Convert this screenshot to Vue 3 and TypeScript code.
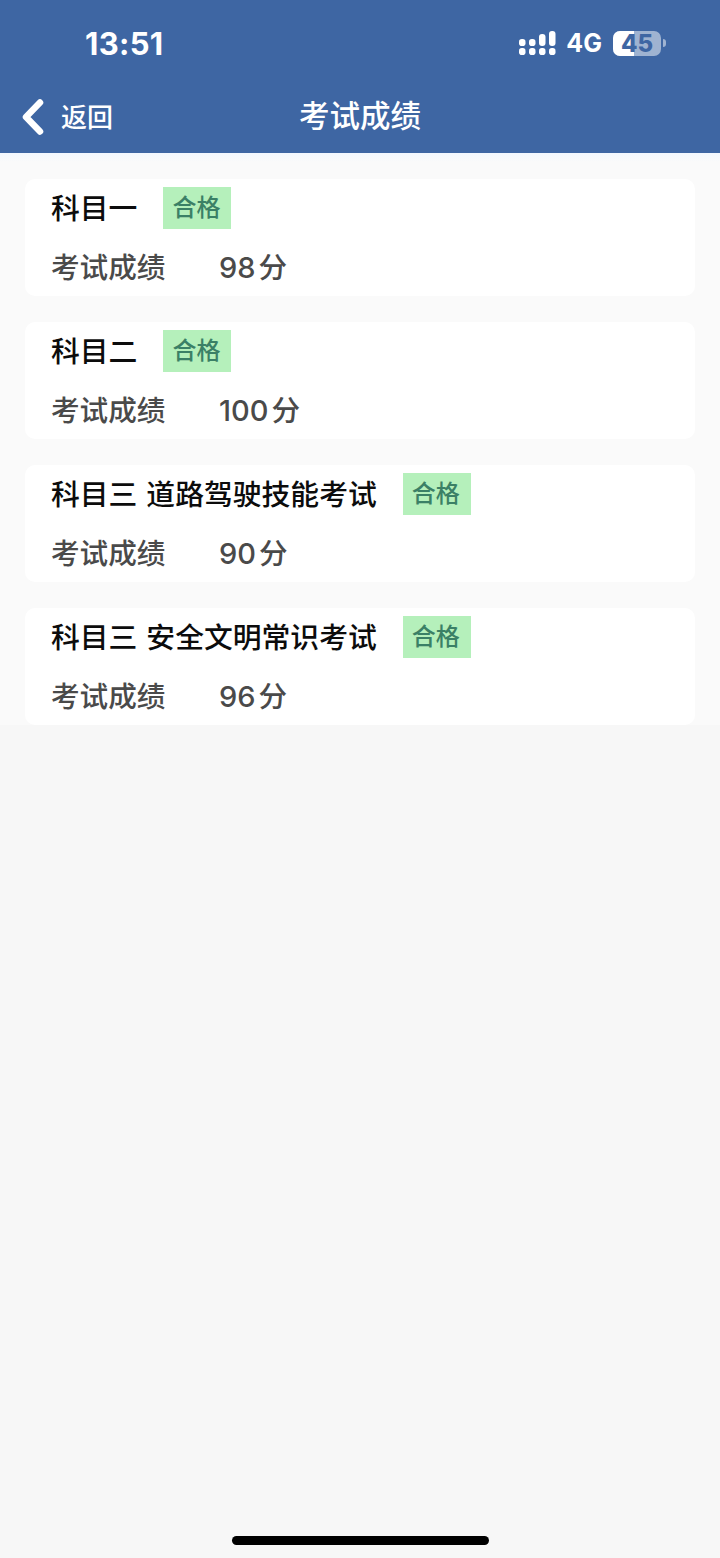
<script setup lang="ts">
interface ExamResult {
  id: number
  name: string
  score: number
}

const results: ExamResult[] = [
  { id: 1, name: '科目一', score: 98 },
  { id: 2, name: '科目二', score: 100 },
  { id: 3, name: '科目三 道路驾驶技能考试', score: 90 },
  { id: 4, name: '科目三 安全文明常识考试', score: 96 },
]
</script>

<template>
  <div class="page">
    <header class="header">
      <div class="status-bar">
        <span class="time">13:51</span>
        <div class="status-right">
          <svg class="signal" viewBox="0 0 37 24" width="37" height="24" fill="#fff">
            <rect x="0" y="8" width="6.5" height="7" rx="2.8" />
            <rect x="0" y="17" width="6.5" height="7" rx="2.8" />
            <rect x="10" y="8" width="6.5" height="7" rx="2.8" />
            <rect x="10" y="17" width="6.5" height="7" rx="2.8" />
            <rect x="20" y="3" width="6.5" height="12" rx="3" />
            <rect x="20" y="17" width="6.5" height="7" rx="2.8" />
            <rect x="30" y="0" width="6.5" height="15" rx="3" />
            <rect x="30" y="17" width="6.5" height="7" rx="2.8" />
          </svg>
          <span class="network">4G</span>
          <div class="battery">
            <div class="battery-body">
              <div class="battery-level" />
              <span class="battery-text">45</span>
            </div>
            <div class="battery-cap" />
          </div>
        </div>
      </div>
      <div class="nav-bar">
        <div class="nav-back">
          <svg viewBox="0 0 24 36" width="24" height="36" fill="none" stroke="#fff" stroke-width="6.5" stroke-linecap="round" stroke-linejoin="round">
            <path d="M19 3.5 5 18l14 14.5" />
          </svg>
          <span class="back-label">返回</span>
        </div>
        <h1 class="nav-title">考试成绩</h1>
      </div>
    </header>

    <main class="list">
      <section v-for="item in results" :key="item.id" class="card">
        <div class="card-title">
          <span class="subject">{{ item.name }}</span>
          <span class="tag">合格</span>
        </div>
        <div class="card-score">
          <span class="score-label">考试成绩</span>
          <span class="score-value"><span class="num">{{ item.score }}</span>分</span>
        </div>
      </section>
    </main>

    <div class="home-indicator" />
  </div>
</template>

<style>
html,
body {
  margin: 0;
  background: #f7f7f7;
}
</style>

<style scoped>
.page {
  position: relative;
  width: 720px;
  height: 1558px;
  overflow: hidden;
  background: #f7f7f7;
  font-family: "Noto Sans CJK SC", "Liberation Sans", sans-serif;
}

.header {
  height: 153px;
  background: #3e66a3;
  color: #fff;
}

.status-bar {
  height: 80px;
  padding: 6px 54px 0 85px;
  display: flex;
  align-items: center;
  justify-content: space-between;
  box-sizing: border-box;
}

.time {
  font-family: Inter, "Liberation Sans", sans-serif;
  font-size: 31px;
  font-weight: 700;
  letter-spacing: 0.3px;
}

.status-right {
  display: flex;
  align-items: center;
}

.signal {
  margin-right: 10px;
}

.network {
  font-family: Inter, "Liberation Sans", sans-serif;
  font-size: 25px;
  font-weight: 700;
  margin-right: 11px;
}

.battery {
  display: flex;
  align-items: center;
}

.battery-body {
  position: relative;
  width: 48px;
  height: 25px;
  border-radius: 7px;
  background: rgba(255, 255, 255, 0.5);
}

.battery-level {
  width: 21px;
  height: 100%;
  border-radius: 7px 0 0 7px;
  background: #fff;
}

.battery-text {
  position: absolute;
  inset: 0;
  text-align: center;
  font-family: Inter, "Liberation Sans", sans-serif;
  font-size: 24px;
  font-weight: 800;
  line-height: 25px;
  color: #3e66a3;
}

.battery-cap {
  width: 3px;
  height: 8px;
  margin-left: 2px;
  border-radius: 0 3px 3px 0;
  background: rgba(255, 255, 255, 0.5);
}

.nav-bar {
  position: relative;
  height: 73px;
  display: flex;
  align-items: center;
  justify-content: center;
}

.nav-back {
  position: absolute;
  left: 21px;
  top: 18px;
  display: flex;
  align-items: center;
}

.back-label {
  margin-left: 16px;
  padding-bottom: 2px;
  font-size: 26px;
  font-weight: 500;
  line-height: 36px;
}

.nav-title {
  margin: 0;
  padding-bottom: 6px;
  font-size: 30.5px;
  font-weight: 500;
  line-height: 40px;
}

.list {
  display: flex;
  flex-direction: column;
  gap: 26px;
  padding: 26px 25px 0;
  background: linear-gradient(#f2f7fe, #fafafa 9px);
}

.card {
  height: 117px;
  padding: 8px 26px 0;
  box-sizing: border-box;
  border-radius: 10px;
  background: #fff;
}

.card-title {
  display: flex;
  align-items: center;
  height: 42px;
}

.subject {
  padding-bottom: 4px;
  font-size: 28.8px;
  font-weight: 500;
  word-spacing: 2.5px;
  color: #0c0c0c;
  white-space: pre;
}

.tag {
  width: 68px;
  height: 42px;
  margin-left: 26px;
  padding-right: 2px;
  box-sizing: border-box;
  background: #b5f0bb;
  color: #3b8066;
  font-size: 24px;
  font-weight: 500;
  line-height: 38px;
  text-align: center;
}

.card-score {
  display: flex;
  align-items: center;
  height: 42px;
  margin-top: 17px;
  color: #4a4a4a;
  font-size: 28.6px;
  font-weight: 500;
}

.score-label {
  width: 168px;
  padding-bottom: 4px;
}

.score-value {
  padding-bottom: 4px;
}

.num {
  font-family: Inter, "Liberation Sans", sans-serif;
  font-size: 29px;
  font-weight: 500;
  margin-right: 3px;
}

.home-indicator {
  position: absolute;
  left: 232px;
  top: 1536px;
  width: 257px;
  height: 9px;
  border-radius: 5px;
  background: #000;
}
</style>
